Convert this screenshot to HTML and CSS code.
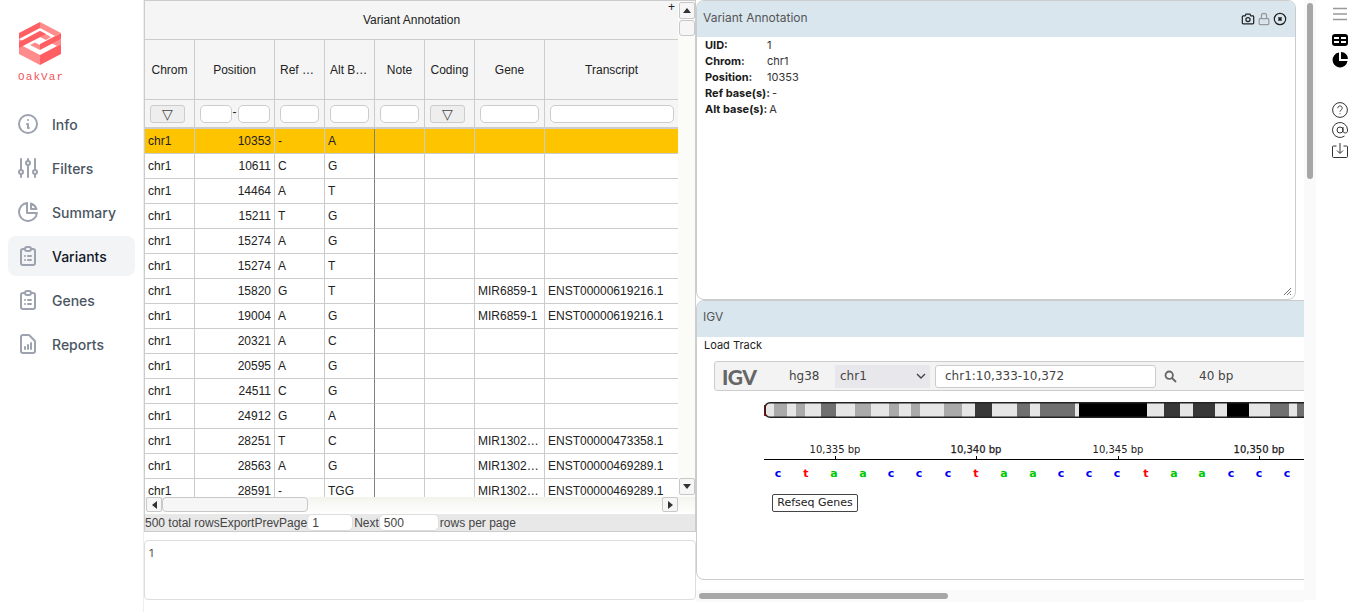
FILE: index.html
```html
<!DOCTYPE html>
<html lang="en">
<head>
<meta charset="utf-8">
<title>OakVar</title>
<link rel="stylesheet" href="styles.css">
</head>
<body>
<div class="app">
  <aside class="sidebar">
    <div class="brand">
      <svg class="logo" width="44" height="44" viewBox="18 22 44 44">
        <polygon class="lg-l" points="19,44 40,55 40,65 19,54"/>
        <polygon class="lg-d" points="40,55 61,44 61,54 40,65"/>
        <polygon class="lg-l" points="61,39 61,44 57,46 52,43.500"/>
        <polygon class="lg-l" points="19,39 27,43 22,45.500 19,44"/>
        <polygon class="lg-l" points="40,31 51,37 46,40 40,37 34,40 29,37"/>
        <polygon class="lg-l" points="40,50 30,45 35,42.500 40,45"/>
        <polygon class="lg-d" points="19,42 40,31 46,34 19,48"/>
        <polygon class="lg-d" points="61,33 61,39 40,50 40,44"/>
        <polygon class="lg-d" points="19,33 40,22 40,28 19,39"/>
        <polygon class="lg-l" points="40,22 61,33 55,36 40,28"/>
      </svg>
      <div class="brand-name">OakVar</div>
    </div>
    <nav class="nav">
      <a class="nav-item"><svg class="nav-icon" viewBox="0 0 24 24"><path d="M13 16h-1v-4h-1m1-4h.01M21 12a9 9 0 11-18 0 9 9 0 0118 0z"/></svg>Info</a>
      <a class="nav-item"><svg class="nav-icon" viewBox="0 0 24 24"><path d="M5 3v11m0 4v3M12 3v2m0 4v12M19 3v11m0 4v3"/><circle cx="5" cy="16" r="2"/><circle cx="12" cy="7" r="2"/><circle cx="19" cy="16" r="2"/></svg>Filters</a>
      <a class="nav-item"><svg class="nav-icon" viewBox="0 0 24 24"><path d="M11 3.055A9.001 9.001 0 1020.945 13H11V3.055z"/><path d="M20.488 9H15V3.512A9.025 9.025 0 0120.488 9z"/></svg>Summary</a>
      <a class="nav-item active"><svg class="nav-icon" viewBox="0 0 24 24"><path d="M9 5H7a2 2 0 00-2 2v12a2 2 0 002 2h10a2 2 0 002-2V7a2 2 0 00-2-2h-2M9 5a2 2 0 002 2h2a2 2 0 002-2M9 5a2 2 0 012-2h2a2 2 0 012 2m-3 7h3m-3 4h3m-6-4h.01M9 16h.01"/></svg>Variants</a>
      <a class="nav-item"><svg class="nav-icon" viewBox="0 0 24 24"><path d="M9 5H7a2 2 0 00-2 2v12a2 2 0 002 2h10a2 2 0 002-2V7a2 2 0 00-2-2h-2M9 5a2 2 0 002 2h2a2 2 0 002-2M9 5a2 2 0 012-2h2a2 2 0 012 2m-3 7h3m-3 4h3m-6-4h.01M9 16h.01"/></svg>Genes</a>
      <a class="nav-item"><svg class="nav-icon" viewBox="0 0 24 24"><path d="M9 17v-2m3 2v-4m3 4v-6m2 10H7a2 2 0 01-2-2V5a2 2 0 012-2h5.586a1 1 0 01.707.293l5.414 5.414a1 1 0 01.293.707V19a2 2 0 01-2 2z"/></svg>Reports</a>
    </nav>
  </aside>

  <section class="left">
    <div class="grid">
      <div class="viewport">
        <table class="vtable">
          <colgroup><col class="c1"><col class="c2"><col class="c3"><col class="c3"><col class="c3"><col class="c3"><col class="c7"><col class="c8"></colgroup>
          <thead>
            <tr class="r-title"><th colspan="8">Variant Annotation<span class="plus">+</span></th></tr>
            <tr class="r-head"><th>Chrom</th><th>Position</th><th class="trunc">Ref …</th><th class="trunc">Alt B…</th><th>Note</th><th>Coding</th><th>Gene</th><th>Transcript</th></tr>
            <tr class="r-filter">
              <th><span class="fbtn">▽</span></th>
              <th><span class="range"><input class="fin"><span class="dash">-</span><input class="fin"></span></th>
              <th><input class="fin"></th><th><input class="fin"></th><th><input class="fin"></th>
              <th><span class="fbtn">▽</span></th>
              <th><input class="fin"></th><th><input class="fin"></th>
            </tr>
          </thead>
          <tbody>
            <tr class="sel"><td>chr1</td><td class="num">10353</td><td>-</td><td>A</td><td></td><td></td><td></td><td></td></tr>
            <tr><td>chr1</td><td class="num">10611</td><td>C</td><td>G</td><td></td><td></td><td></td><td></td></tr>
            <tr><td>chr1</td><td class="num">14464</td><td>A</td><td>T</td><td></td><td></td><td></td><td></td></tr>
            <tr><td>chr1</td><td class="num">15211</td><td>T</td><td>G</td><td></td><td></td><td></td><td></td></tr>
            <tr><td>chr1</td><td class="num">15274</td><td>A</td><td>G</td><td></td><td></td><td></td><td></td></tr>
            <tr><td>chr1</td><td class="num">15274</td><td>A</td><td>T</td><td></td><td></td><td></td><td></td></tr>
            <tr><td>chr1</td><td class="num">15820</td><td>G</td><td>T</td><td></td><td></td><td>MIR6859-1</td><td>ENST00000619216.1</td></tr>
            <tr><td>chr1</td><td class="num">19004</td><td>A</td><td>G</td><td></td><td></td><td>MIR6859-1</td><td>ENST00000619216.1</td></tr>
            <tr><td>chr1</td><td class="num">20321</td><td>A</td><td>C</td><td></td><td></td><td></td><td></td></tr>
            <tr><td>chr1</td><td class="num">20595</td><td>A</td><td>G</td><td></td><td></td><td></td><td></td></tr>
            <tr><td>chr1</td><td class="num">24511</td><td>C</td><td>G</td><td></td><td></td><td></td><td></td></tr>
            <tr><td>chr1</td><td class="num">24912</td><td>G</td><td>A</td><td></td><td></td><td></td><td></td></tr>
            <tr><td>chr1</td><td class="num">28251</td><td>T</td><td>C</td><td></td><td></td><td>MIR1302…</td><td>ENST00000473358.1</td></tr>
            <tr><td>chr1</td><td class="num">28563</td><td>A</td><td>G</td><td></td><td></td><td>MIR1302…</td><td>ENST00000469289.1</td></tr>
            <tr><td>chr1</td><td class="num">28591</td><td>-</td><td>TGG</td><td></td><td></td><td>MIR1302…</td><td>ENST00000469289.1</td></tr>
          </tbody>
        </table>
      </div>
      <div class="vbar">
        <span class="sb-btn"><span class="tri-up"></span></span>
        <span class="sb-thumb-v"></span>
        <span class="vbar-space"></span>
        <span class="sb-btn"><span class="tri-down"></span></span>
      </div>
      <div class="hbar">
        <span class="sb-btn-h"><span class="tri-left"></span></span>
        <span class="sb-thumb-h"></span>
        <span class="hbar-space"></span>
        <span class="sb-btn-h"><span class="tri-right"></span></span>
      </div>
    </div>
    <div class="pager">
      <span>500 total rows</span><span>Export</span><span>Prev</span><span>Page</span><input class="pin pin-a" value="1"><span>Next</span><input class="pin pin-b" value="500"><span>rows per page</span>
    </div>
    <div class="note">1</div>
  </section>

  <section class="right">
    <div class="panel va">
      <div class="panel-head">
        <span>Variant Annotation</span>
        <span class="tools">
          <svg class="tool" viewBox="0 0 16 16"><path d="M2.500 4.500h2.200l1-2h4.600l1 2h2.200a1 1 0 011 1v7a1 1 0 01-1 1h-11a1 1 0 01-1-1v-7a1 1 0 011-1z"/><circle cx="8" cy="8.700" r="2.400"/></svg>
          <svg class="tool dim" viewBox="0 0 16 16"><rect x="2.500" y="7.500" width="11" height="7" rx="1"/><path d="M5 7.500V4.500a3 3 0 016 0v3M8 11v.5"/></svg>
          <svg class="tool" viewBox="0 0 16 16"><circle cx="8" cy="8" r="6.500"/><path class="thick" d="M6.200 6.200l3.600 3.600m0-3.600l-3.600 3.600"/></svg>
        </span>
      </div>
      <div class="details">
        <div class="drow"><b>UID:</b><span>1</span></div>
        <div class="drow"><b>Chrom:</b><span>chr1</span></div>
        <div class="drow"><b>Position:</b><span>10353</span></div>
        <div class="drow"><b>Ref base(s):</b><span>-</span></div>
        <div class="drow"><b>Alt base(s):</b><span>A</span></div>
      </div>
      <svg class="resize" width="9" height="9" viewBox="0 0 9 9"><path d="M8 1L1 8M8 4L4 8M8 7L7 8"/></svg>
    </div>
    <div class="panel igv">
      <div class="panel-head igv-head"><span>IGV</span></div>
      <div class="load">Load Track</div>
      <div class="toolbar">
        <span class="igv-logo">IGV</span>
        <span class="genome">hg38</span>
        <span class="chrsel"><span>chr1</span><svg width="12" height="8" viewBox="0 0 12 8"><path d="M2 2l4 4 4-4"/></svg></span>
        <input class="locus" value="chr1:10,333-10,372">
        <svg class="search" width="13" height="13" viewBox="0 0 13 13"><circle cx="5.200" cy="5.200" r="3.700"/><path d="M8 8l4 4"/></svg>
        <span class="span-bp">40 bp</span>
      </div>
      <svg class="track" width="560" height="80" viewBox="0 0 560 80">
        <rect class="i-l" x="1" y="1" width="559" height="14"/>
        <rect class="i-r" x="0" y="3" width="2" height="11"/>
        <rect class="i-g" x="10" y="1" width="13" height="14"/>
        <rect class="i-g" x="32" y="1" width="9" height="14"/>
        <rect class="i-m" x="57" y="1" width="15" height="14"/>
        <rect class="i-g" x="91" y="1" width="16" height="14"/>
        <rect class="i-g" x="125" y="1" width="10" height="14"/>
        <rect class="i-g" x="147" y="1" width="9" height="14"/>
        <rect class="i-g" x="180" y="1" width="18" height="14"/>
        <rect class="i-d" x="211" y="1" width="17" height="14"/>
        <rect class="i-m" x="253" y="1" width="13" height="14"/>
        <rect class="i-m" x="276" y="1" width="35" height="14"/>
        <rect class="i-k" x="315" y="1" width="68" height="14"/>
        <rect class="i-d" x="400" y="1" width="16" height="14"/>
        <rect class="i-d" x="429" y="1" width="22" height="14"/>
        <rect class="i-k" x="463" y="1" width="22" height="14"/>
        <rect class="i-m" x="506" y="1" width="19" height="14"/>
        <rect class="i-m" x="533" y="1" width="27" height="14"/>
        <path class="i-out" d="M560 .75H6a5 5 0 00-5 5v4.500a5 5 0 005 5H560"/>
        <text class="rl" x="71" y="51">10,335 bp</text>
        <text class="rl strong" x="212" y="51">10,340 bp</text>
        <text class="rl" x="354" y="51">10,345 bp</text>
        <text class="rl strong" x="495" y="51">10,350 bp</text>
        <path class="axis" d="M0 57.500H560M71.500 54V57M212.500 54V57M354.500 54V57M495.500 54V57"/>
        <text class="b c" x="14" y="75">c</text><text class="b t" x="42" y="75">t</text><text class="b a" x="70" y="75">a</text><text class="b a" x="99" y="75">a</text><text class="b c" x="127" y="75">c</text><text class="b c" x="155" y="75">c</text><text class="b c" x="184" y="75">c</text><text class="b t" x="212" y="75">t</text><text class="b a" x="240" y="75">a</text><text class="b a" x="269" y="75">a</text><text class="b c" x="297" y="75">c</text><text class="b c" x="325" y="75">c</text><text class="b c" x="353" y="75">c</text><text class="b t" x="382" y="75">t</text><text class="b a" x="410" y="75">a</text><text class="b a" x="438" y="75">a</text><text class="b c" x="467" y="75">c</text><text class="b c" x="495" y="75">c</text><text class="b c" x="523" y="75">c</text>
      </svg>
      <div class="tracklabel">Refseq Genes</div>
    </div>
    <div class="hscroll"><span class="hthumb"></span></div>
  </section>

  <div class="vscroll"><span class="vthumb"></span></div>

  <aside class="rail">
    <svg class="rail-i menu" width="16" height="14" viewBox="0 0 16 14"><path d="M1 1.500h14M1 7h14M1 12.500h14"/></svg>
    <svg class="rail-i table" width="16" height="12" viewBox="0 0 16 12"><rect class="fill" x="0" y="0" width="16" height="12" rx="3"/><rect class="cut" x="2" y="3" width="5" height="2"/><rect class="cut" x="9" y="3" width="5" height="2"/><rect class="cut" x="2" y="7" width="5" height="2"/><rect class="cut" x="9" y="7" width="5" height="2"/></svg>
    <svg class="rail-i pie" width="16" height="16" viewBox="0 0 16 16"><path class="fill" d="M7 0.500A7.500 7.500 0 1015.500 9H7z"/><path class="fill" d="M9 0a7 7 0 017 7H9z"/></svg>
    <span class="rail-gap"></span>
    <svg class="rail-i line" width="16" height="16" viewBox="0 0 16 16"><circle cx="8" cy="8" r="7.400"/><path d="M5.800 6.200a2.200 2.200 0 114 1.200c-.7.700-1.800 1-1.800 2.200M8 11.400v.8"/></svg>
    <svg class="rail-i line" width="16" height="16" viewBox="0 0 16 16"><circle cx="8" cy="8" r="3"/><path d="M11 5v4.200a2.300 2.300 0 004.500 0V8a7.500 7.500 0 10-3 6"/></svg>
    <svg class="rail-i line" width="16" height="16" viewBox="0 0 16 16"><path d="M4.500 4H1.500a1 1 0 00-1 1v9.500a1 1 0 001 1h13a1 1 0 001-1V5a1 1 0 00-1-1h-3M8 1v10M5 8.500l3 3 3-3"/></svg>
  </aside>
</div>
</body>
</html>
```
FILE: styles.css
```css
* { box-sizing: border-box; }
html, body { margin: 0; padding: 0; height: 612px; overflow: hidden; background: #fff; }
body { font-family: "Liberation Sans", Arial, sans-serif; font-size: 12px; color: #222; }

.app { display: flex; height: 612px; position: relative; }

/* sidebar */
.sidebar { width: 144px; flex: none; border-right: 1px solid #eceef1; padding: 22px 8px 0; }
.brand { height: 82px; padding-left: 10px; }
.logo { display: block; margin-left: 0; }
.lg-d { fill: #ff5e62; }
.lg-l { fill: #ff8c8c; }
.brand-name { font-family: "Liberation Mono", monospace; font-size: 11px; line-height: 13px; letter-spacing: 1.1px; color: #f0555a; margin-top: 5px; }
.nav { display: flex; flex-direction: column; gap: 4px; width: 127px; }
.nav-item { display: flex; align-items: center; height: 40px; padding-left: 8px; border-radius: 8px; font-family: Inter, sans-serif; font-size: 14px; font-weight: 500; color: #4b5563; }
.nav-item.active { background: #f3f4f6; color: #111827; }
.nav-icon { width: 24px; height: 24px; margin-right: 12px; fill: none; stroke: #9ca3af; stroke-width: 2; stroke-linecap: round; stroke-linejoin: round; }

/* left column */
.left { width: 552px; flex: none; display: flex; flex-direction: column; }
.grid { display: grid; grid-template-columns: 534px 18px; grid-template-rows: 496px 17px; border-top: 1px solid #ccc; height: 514px; }
.viewport { overflow: hidden; border-left: 1px solid #ccc; height: 496px; }
.vtable { width: 533px; table-layout: fixed; border-collapse: separate; border-spacing: 0; font-size: 12px; }
.c1 { width: 50px; } .c2 { width: 80px; } .c3 { width: 50px; } .c7 { width: 70px; } .c8 { width: 133px; }
.vtable th { background: #f5f5f5; font-weight: 400; color: #222; border-right: 1px solid #ccc; border-bottom: 1px solid #ccc; padding: 0; text-align: center; position: relative; }
.vtable th:last-child { border-right: 0; }
.r-title th { height: 39px; }
.r-head th { height: 60px; white-space: nowrap; }
.vtable th.trunc { text-align: left; padding-left: 5px; }
.r-filter th { height: 29px; border-bottom-width: 2px; }
.plus { position: absolute; right: 3px; top: 1px; font-size: 12px; line-height: 10px; color: #222; }
.fbtn { display: block; width: 35px; height: 18px; margin-left: 5px; background: #eee; border: 1px solid #ccc; border-radius: 3px; font-size: 14px; line-height: 17px; color: #444; }
.fin { display: block; width: 39px; height: 18px; margin: 0 auto; padding: 0; border: 1px solid #ccc; border-radius: 5px; background: #fff; }
.range { display: flex; justify-content: center; align-items: center; }
.range .fin { width: 32px; margin: 0; }
.dash { width: 6px; margin-top: -4px; text-align: center; }
.r-filter th:nth-child(7) .fin { width: 59px; }
.r-filter th:nth-child(8) .fin { width: 124px; }
.vtable td { height: 25px; padding: 0 3px; border-right: 1px solid #ccc; border-bottom: 1px solid #ccc; white-space: nowrap; overflow: hidden; color: #222; background: #fff; }
.vtable td:last-child { border-right: 0; }
.vtable td:nth-child(4) { border-right-color: #808080; }
.vtable td.num { text-align: right; padding-right: 3px; }
.sel td { background: #ffc400; }

.vbar { background: #fbfbf7; display: flex; flex-direction: column; padding: 1px 1px 2px; height: 496px; border-right: 1px solid #ccc; }
.sb-btn { display: flex; align-items: center; justify-content: center; width: 16px; height: 17px; background: #f6f6f6; border: 1px solid #c8c8c8; border-radius: 2px; }
.sb-thumb-v { display: block; width: 16px; height: 16px; background: #f6f6f6; border: 1px solid #c8c8c8; border-radius: 3px; margin-top: 1px; }
.vbar-space { flex: 1; }
.tri-up, .tri-down, .tri-left, .tri-right { width: 0; height: 0; display: block; border-style: solid; border-color: transparent; }
.tri-up { border-width: 0 4px 5px; border-bottom-color: #333; }
.tri-down { border-width: 5px 4px 0; border-top-color: #333; }
.tri-left { border-width: 4px 5px 4px 0; border-right-color: #333; }
.tri-right { border-width: 4px 0 4px 5px; border-left-color: #333; }
.hbar { grid-column: 1 / 3; display: flex; height: 17px; padding: 0 17px 2px 1px; background: linear-gradient(#f4f4ee, #fff); border-right: 1px solid #ccc; border-left: 1px solid #ccc; }
.sb-btn-h { display: flex; align-items: center; justify-content: center; width: 16px; height: 15px; background: #f6f6f6; border: 1px solid #c8c8c8; border-radius: 2px; }
.sb-thumb-h { display: block; width: 146px; height: 15px; background: #f6f6f6; border: 1px solid #c8c8c8; border-radius: 4px; }
.hbar-space { flex: 1; }

.pager { height: 18px; display: flex; align-items: center; background: #e8e8e8; border-left: 1px solid #ccc; border-right: 1px solid #ccc; border-bottom: 1px solid #ccc; color: #444; font-size: 12px; white-space: nowrap; }
.pin { height: 17px; padding: 0 3px; border: 1px solid #ddd; border-radius: 5px; background: #fff; font: 12px "Liberation Sans", sans-serif; color: #444; }
.pin-a { width: 46px; margin: 0 1px 0 0; padding-left: 4px; }
.pin-b { width: 60px; margin: 0 1px 0 0; padding-left: 4px; }
.note { height: 60px; margin-top: 8px; border: 1px solid #ddd; border-radius: 4px; padding: 5px 4px; font-family: Inter, sans-serif; font-size: 11px; color: #555; }

/* right column */
.right { width: 608px; flex: none; overflow: hidden; position: relative; height: 612px; }
.panel { border: 1px solid #ccc; border-radius: 8px; background: #fff; position: relative; overflow: hidden; }
.va { width: 600px; height: 300px; }
.panel-head { height: 36px; background: #d9e6ee; display: flex; justify-content: space-between; align-items: flex-start; padding: 9px 8px 0 6px; font-family: Inter, sans-serif; font-size: 12px; line-height: 15px; color: #555; }
.tools { display: flex; gap: 2px; margin-top: 2px; }
.tool { width: 14px; height: 14px; fill: none; stroke: #222; stroke-width: 1.4; }
.tool.dim { stroke: #999; }
.thick { stroke-width: 1.8; }
.details { padding: 0 0 0 8px; font-family: Inter, sans-serif; font-size: 11px; line-height: 16px; color: #333; }
.drow { display: flex; height: 16px; }
.drow b { min-width: 62px; padding-right: 2px; font-weight: 700; color: #1a1a1a; white-space: nowrap; }
.resize { position: absolute; right: 3px; bottom: 3px; fill: none; stroke: #777; stroke-width: 1; }
.igv { width: 640px; height: 280px; }
.igv-head { height: 36px; padding-top: 8px; }
.load { font-family: Inter, sans-serif; font-size: 11px; line-height: 14px; color: #222; padding: 1px 0 0 7px; height: 24px; }
.toolbar { display: flex; align-items: center; width: 620px; height: 30px; margin-left: 17px; border: 1px solid #ccc; border-radius: 3px; background: #f3f3f3; font-family: "DejaVu Sans", sans-serif; font-size: 12px; color: #444; }
.igv-logo { width: 74px; padding-left: 7px; font-family: Lato, sans-serif; font-weight: 900; font-size: 21px; letter-spacing: -0.5px; color: #666; }
.genome { width: 46px; }
.chrsel { display: flex; justify-content: space-between; align-items: center; width: 95px; height: 23px; padding: 0 3px 0 5px; background: #e8e8ec; }
.chrsel svg { fill: none; stroke: #444; stroke-width: 1.4; }
.locus { width: 221px; height: 23px; margin-left: 5px; padding: 0 8px 0 9px; border: 1px solid #ccc; border-radius: 3px; background: #fff; font: 12px "DejaVu Sans", sans-serif; color: #444; }
.search { margin-left: 8px; fill: none; stroke: #666; stroke-width: 1.8; }
.span-bp { margin-left: 22px; }
.track { display: block; margin: 11px 0 0 67px; }
.i-l { fill: #e6e6e6; } .i-g { fill: #aaa; } .i-m { fill: #707070; } .i-d { fill: #383838; } .i-k { fill: #000; } .i-r { fill: #d00000; }
.i-out { fill: none; stroke: #222; stroke-width: 1.5; }
.rl { font: 10px "DejaVu Sans", sans-serif; fill: #222; text-anchor: middle; }
.rl.strong { stroke: #222; stroke-width: .25; }
.axis { fill: none; stroke: #000; stroke-width: 1; }
.b { font: 700 11px "DejaVu Sans", sans-serif; text-anchor: middle; }
.b.c { fill: #0000f0; } .b.t { fill: #f00; } .b.a { fill: #00c800; }
.tracklabel { width: 86px; height: 18px; margin: 12px 0 0 75px; border: 1px solid #444; border-radius: 2px; font-family: "DejaVu Sans", sans-serif; font-size: 11px; line-height: 16px; text-align: center; color: #222; background: #fff; }
.hscroll { height: 12px; margin-top: 10px; background: #fafafa; padding: 3px 0 3px 3px; }
.hthumb { display: block; width: 249px; height: 6px; border-radius: 3px; background: #a6a6a6; }

.vscroll { position: absolute; left: 1304px; top: 0; width: 12px; height: 600px; background: #fafafa; padding: 3px 3px; }
.vthumb { display: block; width: 6px; height: 176px; border-radius: 3px; background: #a6a6a6; }

/* right rail */
.rail { width: 62px; flex: none; margin-left: 12px; padding: 7px 0 0 16px; display: flex; flex-direction: column; }
.rail-i { display: block; margin-bottom: 4px; }
.menu { margin-bottom: 13px; fill: none; stroke: #999; stroke-width: 1.6; }
.table { margin-bottom: 6px; }
.fill { fill: #000; }
.cut { fill: #fff; }
.pie { margin-bottom: 0; }
.rail-gap { height: 34px; }
.line { fill: none; stroke: #333; stroke-width: 1; }
```
